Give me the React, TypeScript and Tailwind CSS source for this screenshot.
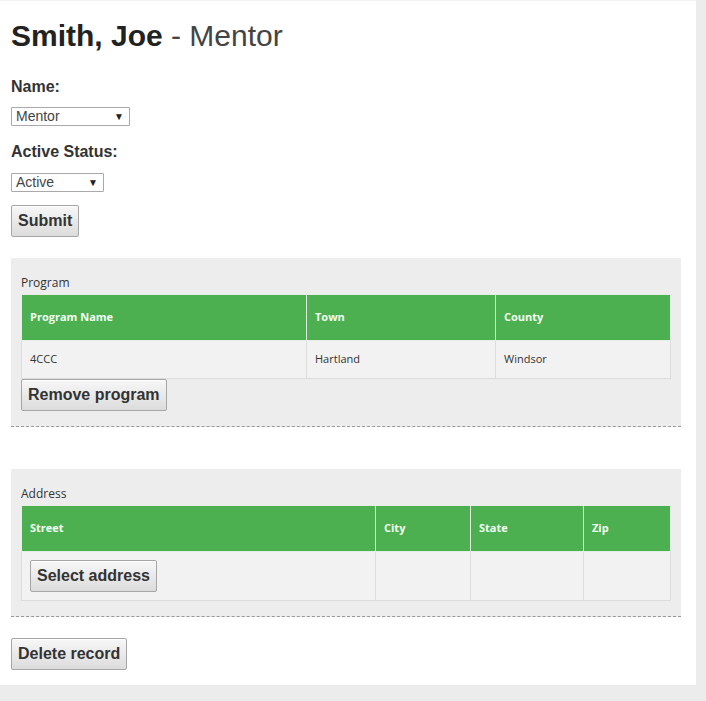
import React from "react";

const btn =
  "border border-[#a6a6a6] rounded-[2px] bg-gradient-to-b from-[#f7f7f7] to-[#dcdcdc] text-[16px] leading-[20px] font-bold text-[#333] py-[5px] px-[6px] shadow-[inset_0_1px_0_#fff]";

function FakeSelect({ value, width }: { value: string; width: string }) {
  return (
    <div
      className={`${width} h-[19px] border border-[#a9a9a9] rounded-[1px] bg-white flex items-center justify-between pl-[4px] pr-[5px] text-[14px] leading-[17px] text-[#444]`}
    >
      <span>{value}</span>
      <span className="text-[10px] text-[#222]">▼</span>
    </div>
  );
}

const th = "border border-[#e2efe2] bg-[#4caf50] text-[#f2fff2] font-bold text-[11px] text-left align-middle pl-[8px] h-[46px]";
const td = "border border-[#dcdcdc] bg-[#f2f2f2] text-[11px] text-[#333] text-left align-middle pl-[8px]";

export default function App() {
  return (
    <div className="min-h-screen bg-[#ececec] font-['Liberation_Sans',Arial,sans-serif]">
      <div className="w-[696px] bg-white border-t border-[#f3f3f3] pl-[11px] pr-[15px] pb-[15px]">
        <h1 className="pt-[18px] text-[30px] leading-[34px] text-[#222]">
          <span className="font-bold">Smith, Joe</span>
          <span className="text-[#444]"> - Mentor</span>
        </h1>

        <div className="mt-[24px] text-[16px] leading-[20px] font-bold text-[#333]">Name:</div>
        <div className="mt-[10px]">
          <FakeSelect value="Mentor" width="w-[119px]" />
        </div>

        <div className="mt-[16px] text-[16px] leading-[20px] font-bold text-[#333]">Active Status:</div>
        <div className="mt-[11px]">
          <FakeSelect value="Active" width="w-[93px]" />
        </div>

        <button className={`${btn} mt-[13px] block`}>Submit</button>

        {/* Program */}
        <div className="mt-[21px] bg-[#ededed] border-b border-dashed border-[#999] pt-[17px] px-[10px] pb-[15px]">
          <div className="text-[12px] leading-[16px] text-[#333] font-['Open_Sans',sans-serif] mb-[3px]">Program</div>
          <table className="w-full border-collapse font-['Open_Sans',sans-serif]">
            <thead>
              <tr>
                <th className={`${th} w-[285px]`}>Program Name</th>
                <th className={`${th} w-[189px]`}>Town</th>
                <th className={th}>County</th>
              </tr>
            </thead>
            <tbody>
              <tr className="h-[38px]">
                <td className={td}>4CCC</td>
                <td className={td}>Hartland</td>
                <td className={td}>Windsor</td>
              </tr>
            </tbody>
          </table>
          <button className={`${btn} block`}>Remove program</button>
        </div>

        {/* Address */}
        <div className="mt-[42px] bg-[#ededed] border-b border-dashed border-[#999] pt-[17px] px-[10px] pb-[15px]">
          <div className="text-[12px] leading-[16px] text-[#333] font-['Open_Sans',sans-serif] mb-[3px]">Address</div>
          <table className="w-full border-collapse font-['Open_Sans',sans-serif]">
            <thead>
              <tr>
                <th className={`${th} w-[354px]`}>Street</th>
                <th className={`${th} w-[95px]`}>City</th>
                <th className={`${th} w-[113px]`}>State</th>
                <th className={th}>Zip</th>
              </tr>
            </thead>
            <tbody>
              <tr className="h-[49px]">
                <td className={td}>
                  <button className={`${btn} font-['Liberation_Sans',Arial,sans-serif]`}>Select address</button>
                </td>
                <td className={td}></td>
                <td className={td}></td>
                <td className={td}></td>
              </tr>
            </tbody>
          </table>
        </div>

        <button className={`${btn} mt-[21px] block`}>Delete record</button>
      </div>
    </div>
  );
}
